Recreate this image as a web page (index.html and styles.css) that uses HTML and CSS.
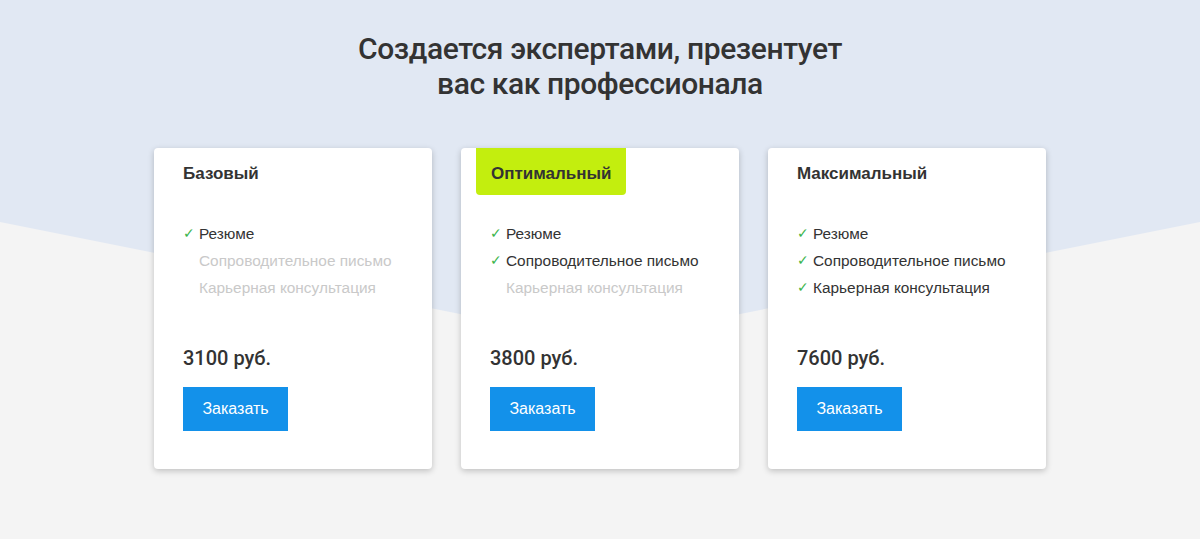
FILE: index.html
```html
<!DOCTYPE html>
<html lang="ru">
<head>
<meta charset="utf-8">
<title>Тарифы</title>
<link rel="stylesheet" href="styles.css">
</head>
<body>
<section class="pricing">
  <h1 class="pricing-title">Создается экспертами, презентует<br>вас как профессионала</h1>
  <div class="plans">
    <div class="plan">
      <div class="plan-head"><span class="plan-name">Базовый</span></div>
      <ul class="features">
        <li class="feature on"><span class="check">✓</span>Резюме</li>
        <li class="feature off"><span class="check">✓</span>Сопроводительное письмо</li>
        <li class="feature off"><span class="check">✓</span>Карьерная консультация</li>
      </ul>
      <div class="price">3100 руб.</div>
      <a class="order" href="#">Заказать</a>
    </div>
    <div class="plan">
      <div class="plan-head"><span class="plan-name badge">Оптимальный</span></div>
      <ul class="features">
        <li class="feature on"><span class="check">✓</span>Резюме</li>
        <li class="feature on"><span class="check">✓</span>Сопроводительное письмо</li>
        <li class="feature off"><span class="check">✓</span>Карьерная консультация</li>
      </ul>
      <div class="price">3800 руб.</div>
      <a class="order" href="#">Заказать</a>
    </div>
    <div class="plan">
      <div class="plan-head"><span class="plan-name">Максимальный</span></div>
      <ul class="features">
        <li class="feature on"><span class="check">✓</span>Резюме</li>
        <li class="feature on"><span class="check">✓</span>Сопроводительное письмо</li>
        <li class="feature on"><span class="check">✓</span>Карьерная консультация</li>
      </ul>
      <div class="price">7600 руб.</div>
      <a class="order" href="#">Заказать</a>
    </div>
  </div>
</section>
</body>
</html>
```

FILE: styles.css
```css
* { box-sizing: border-box; }
html, body { margin: 0; padding: 0; }
body {
  background: #f4f4f4;
  font-family: "Liberation Sans", Arial, sans-serif;
  color: #333;
  height: 539px;
  overflow: hidden;
}
.pricing {
  position: relative;
  padding: 31px 0 70px;
}
.pricing::before {
  content: "";
  position: absolute;
  left: 0; top: 0; right: 0;
  height: 342px;
  background: #e1e8f3;
  clip-path: polygon(0 0, 100% 0, 100% 222px, 50% 342px, 0 222px);
  z-index: 0;
}
.pricing-title {
  position: relative;
  margin: 0;
  text-align: center;
  font-family: Roboto, sans-serif;
  font-weight: 500;
  font-size: 30px;
  letter-spacing: -0.4px;
  line-height: 35px;
  color: #333;
}
.plans {
  position: relative;
  display: flex;
  justify-content: center;
  gap: 29px;
  margin-top: 47px;
}
.plan {
  width: 278px;
  background: #fff;
  border-radius: 4px;
  box-shadow: 0 2px 6px rgba(0,0,0,0.22);
  padding: 0 29px 38px;
  display: flex;
  flex-direction: column;
  align-items: flex-start;
}
.plan-head {
  height: 47px;
  display: flex;
  align-items: stretch;
}
.plan-name {
  display: flex;
  align-items: center;
  padding-top: 4px;
  font-weight: 700;
  font-size: 17px;
  color: #333;
}
.badge {
  background: #c3ee0e;
  margin-left: -14px;
  padding: 4px 14px 0 15px;
  border-radius: 0 0 4px 4px;
}
.features {
  list-style: none;
  margin: 25px 0 0;
  padding: 0;
}
.feature {
  display: flex;
  align-items: center;
  font-size: 15.4px;
  line-height: 27px;
  height: 27px;
}
.check {
  width: 16px;
  font-size: 14px;
  color: #3cb44b;
}
.feature.on { color: #333; }
.feature.off { color: #c9c9c9; }
.feature.off .check { visibility: hidden; }
.price {
  margin-top: 43px;
  font-family: Roboto, sans-serif;
  font-weight: 500;
  font-size: 20px;
  line-height: 28px;
  color: #333;
}
.order {
  margin-top: 15px;
  display: flex;
  align-items: center;
  justify-content: center;
  width: 105px;
  height: 44px;
  background: #1391ea;
  color: #fff;
  text-decoration: none;
  font-size: 16px;
}
```
